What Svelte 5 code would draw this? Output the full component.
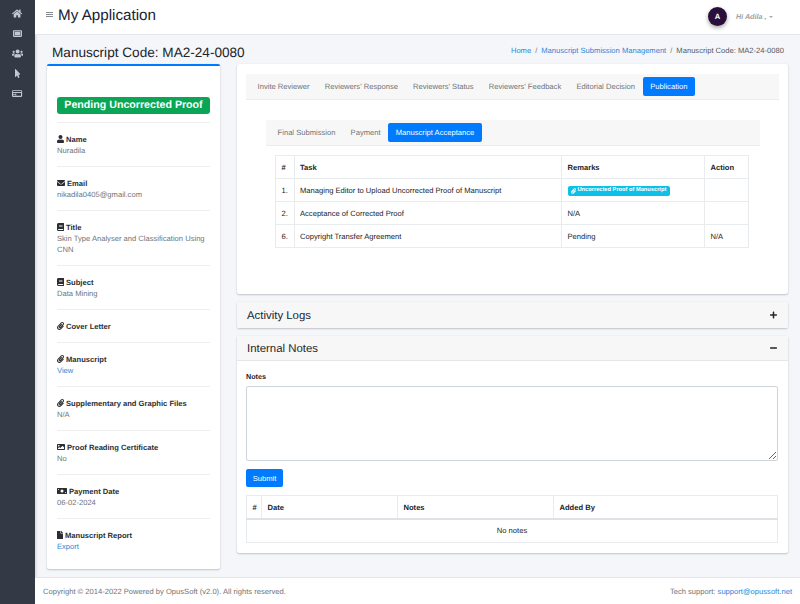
<script>
  const P = {
    home: ['0 0 576 512','M280.37 148.26L96 300.11V464a16 16 0 0 0 16 16l112.06-.29a16 16 0 0 0 15.92-16V368a16 16 0 0 1 16-16h64a16 16 0 0 1 16 16v95.64a16 16 0 0 0 16 16.05L464 480a16 16 0 0 0 16-16V300L295.67 148.26a12.19 12.19 0 0 0-15.3 0zM571.6 251.47L488 182.56V44.05a12 12 0 0 0-12-12h-56a12 12 0 0 0-12 12v72.61L318.47 43a48 48 0 0 0-61 0L4.34 251.47a12 12 0 0 0-1.6 16.9l25.5 31A12 12 0 0 0 45.15 301l235.22-193.74a12.19 12.19 0 0 1 15.3 0L530.9 301a12 12 0 0 0 16.9-1.6l25.5-31a12 12 0 0 0-1.7-16.93z'],
    frame: ['0 0 512 512','M464 64H48C21.5 64 0 85.5 0 112v288c0 26.5 21.5 48 48 48h416c26.5 0 48-21.5 48-48V112c0-26.5-21.500-48-48-48zM448 384H64V128h384z M96 160h320v192H96z'],
    users: ['0 0 640 512','M96 224c35.3 0 64-28.7 64-64s-28.7-64-64-64-64 28.7-64 64 28.7 64 64 64zm448 0c35.3 0 64-28.7 64-64s-28.7-64-64-64-64 28.7-64 64 28.7 64 64 64zm32 32h-64c-17.6 0-33.5 7.1-45.1 18.6 40.3 22.1 68.9 62 75.1 109.4h66c17.7 0 32-14.3 32-32v-32c0-35.3-28.7-64-64-64zm-256 0c61.9 0 112-50.1 112-112S381.9 32 320 32 208 82.1 208 144s50.1 112 112 112zm76.8 32h-8.3c-20.8 10-43.9 16-68.5 16s-47.6-6-68.5-16h-8.3C179.6 288 128 339.6 128 403.2V432c0 26.5 21.5 48 48 48h288c26.5 0 48-21.5 48-48v-28.8c0-63.6-51.6-115.2-115.2-115.2zm-223.7-13.4C161.5 263.1 145.6 256 128 256H64c-35.3 0-64 28.7-64 64v32c0 17.7 14.3 32 32 32h65.9c6.3-47.4 34.9-87.3 75.2-109.4z'],
    pointer: ['0 0 320 512','M302.189 329.126H196.105l55.831 135.993c3.889 9.428-.555 19.999-9.444 23.999l-49.165 21.427c-9.165 4-19.443-.571-23.332-9.714l-53.053-129.136-86.664 89.138C18.729 472.71 0 463.554 0 447.977V18.299C0 1.899 19.921-6.096 30.277 5.443l284.412 292.542c11.472 11.179 3.007 31.141-12.5 31.141z'],
    card: ['0 0 576 512','M528 64H48C21.500 64 0 85.500 0 112v288c0 26.500 21.500 48 48 48h480c26.500 0 48-21.500 48-48V112c0-26.500-21.500-48-48-48zM64 224h144v64H64zm0 96h144v64H64zm448 64H240V224h272z M48 112h480v64H48z'],
    user: ['0 0 448 512','M224 256c70.7 0 128-57.3 128-128S294.7 0 224 0 96 57.3 96 128s57.3 128 128 128zm89.6 32h-16.7c-22.2 10.2-46.9 16-72.9 16s-50.6-5.8-72.9-16h-16.7C60.2 288 0 348.2 0 422.4V464c0 26.5 21.5 48 48 48h352c26.5 0 48-21.5 48-48v-41.6c0-74.2-60.2-134.4-134.4-134.4z'],
    mail: ['0 0 512 512','M502.3 190.8c3.9-3.1 9.7-.2 9.7 4.7V400c0 26.5-21.5 48-48 48H48c-26.5 0-48-21.5-48-48V195.6c0-5 5.7-7.8 9.7-4.7 22.4 17.4 52.1 39.5 154.1 113.6 21.1 15.4 56.7 47.8 92.2 47.6 35.7.3 72-32.8 92.3-47.6 102-74.1 131.6-96.3 154-113.7zM256 320c23.2.4 56.6-29.2 73.4-41.4 132.7-96.3 142.8-104.7 173.4-128.7 5.8-4.5 9.2-11.5 9.2-18.9v-19c0-26.5-21.5-48-48-48H48C21.5 64 0 85.5 0 112v19c0 7.4 3.4 14.3 9.2 18.9 30.6 23.9 40.7 32.4 173.4 128.7 16.8 12.2 50.2 41.8 73.4 41.4z'],
    book: ['0 0 448 512','M448 360V24c0-13.3-10.7-24-24-24H96C43 0 0 43 0 96v320c0 53 43 96 96 96h328c13.3 0 24-10.7 24-24v-16c0-7.5-3.5-14.3-8.9-18.7-4.2-15.4-4.2-59.3 0-74.7 5.4-4.3 8.9-11.1 8.9-18.6zM128 134c0-3.3 2.7-6 6-6h212c3.3 0 6 2.7 6 6v20c0 3.3-2.7 6-6 6H134c-3.3 0-6-2.7-6-6v-20zm0 64c0-3.3 2.7-6 6-6h212c3.3 0 6 2.7 6 6v20c0 3.3-2.7 6-6 6H134c-3.3 0-6-2.7-6-6v-20zm253.4 250H96c-17.7 0-32-14.3-32-32 0-17.6 14.4-32 32-32h285.4c-1.9 17.1-1.9 46.9 0 64z'],
    clip: ['0 0 448 512','M43.246 466.142c-58.43-60.289-57.341-157.511 1.386-217.581L254.392 34c44.316-45.332 116.351-45.336 160.671 0 43.89 44.894 43.943 117.329 0 162.276L232.214 383.128c-29.855 30.537-78.633 30.111-107.982-.998-28.275-29.97-27.368-77.473 1.452-106.953l143.743-146.835c6.182-6.314 16.312-6.422 22.626-.241l22.861 22.379c6.315 6.182 6.422 16.312.241 22.626L171.427 319.927c-4.932 5.045-5.236 13.428-.648 18.292 4.372 4.634 11.245 4.711 15.688.165l182.849-186.851c19.613-20.062 19.613-52.725-.011-72.798-19.189-19.627-49.957-19.637-69.154 0L90.39 293.295c-34.763 35.56-35.299 93.12-1.191 128.313 34.01 35.093 88.985 35.137 123.058.286l172.06-175.999c6.177-6.319 16.307-6.433 22.626-.256l22.877 22.364c6.319 6.177 6.434 16.307.256 22.626l-172.06 175.998c-59.576 60.938-155.943 60.216-214.77-.485z'],
    image: ['0 0 512 512','M464 448H48c-26.51 0-48-21.49-48-48V112c0-26.51 21.49-48 48-48h416c26.51 0 48 21.49 48 48v288c0 26.51-21.49 48-48 48zM112 120c-30.928 0-56 25.072-56 56s25.072 56 56 56 56-25.072 56-56-25.072-56-56-56zM64 384h384V272l-87.515-87.515c-4.686-4.686-12.284-4.686-16.971 0L208 320l-55.515-55.515c-4.686-4.686-12.284-4.686-16.971 0L64 336v48z'],
    money: ['0 0 640 512','M32 64h576c17.700 0 32 14.300 32 32v320c0 17.700-14.300 32-32 32H32c-17.700 0-32-14.300-32-32V96c0-17.700 14.300-32 32-32zM320 160a96 96 0 1 0 0 192 96 96 0 1 0 0-192z M64 128v64a64 64 0 0 0 64-64z M576 384v-64a64 64 0 0 0-64 64z'],
    file: ['0 0 384 512','M224 136V0H24C10.7 0 0 10.7 0 24v464c0 13.3 10.7 24 24 24h336c13.3 0 24-10.7 24-24V160H248c-13.2 0-24-10.8-24-24zm160-14.1v6.1H256V0h6.1c6.4 0 12.5 2.5 17 7l97.9 98c4.5 4.5 7 10.6 7 16.9z'],
    plus: ['0 0 448 512','M416 208H272V64c0-17.670-14.330-32-32-32h-32c-17.670 0-32 14.330-32 32v144H32c-17.670 0-32 14.330-32 32v32c0 17.670 14.330 32 32 32h144v144c0 17.670 14.330 32 32 32h32c17.670 0 32-14.330 32-32V304h144c17.670 0 32-14.330 32-32v-32c0-17.670-14.330-32-32-32z'],
    minus: ['0 0 448 512','M416 208H32c-17.670 0-32 14.330-32 32v32c0 17.670 14.330 32 32 32h384c17.670 0 32-14.330 32-32v-32c0-17.670-14.330-32-32-32z']
  };
  const side = ['home', 'frame', 'users', 'pointer', 'card'];
  const info = [
    { icon: 'user', label: 'Name', value: 'Nuradila' },
    { icon: 'mail', label: 'Email', value: 'nikadila0405@gmail.com' },
    { icon: 'book', label: 'Title', value: 'Skin Type Analyser and Classification Using CNN' },
    { icon: 'book', label: 'Subject', value: 'Data Mining' },
    { icon: 'clip', label: 'Cover Letter' },
    { icon: 'clip', label: 'Manuscript', link: 'View' },
    { icon: 'clip', label: 'Supplementary and Graphic Files', value: 'N/A' },
    { icon: 'image', label: 'Proof Reading Certificate', value: 'No' },
    { icon: 'money', label: 'Payment Date', value: '06-02-2024' },
    { icon: 'file', label: 'Manuscript Report', link: 'Export' }
  ];
  const tabs = ['Invite Reviewer', "Reviewers' Response", "Reviewers' Status", "Reviewers' Feedback", 'Editorial Decision', 'Publication'];
  const sub = ['Final Submission', 'Payment', 'Manuscript Acceptance'];
</script>

{#snippet ic(name, cls)}
  <svg class={cls} viewBox={P[name][0]} aria-hidden="true"><path fill-rule="evenodd" d={P[name][1]} /></svg>
{/snippet}

<div class="shell">
  <aside class="sidebar">
    {#each side as s}
      <span class="side-item">{@render ic(s, 'side-ic')}</span>
    {/each}
  </aside>
  <div class="main">
    <header class="topbar">
      <span class="burger"><i></i><i></i><i></i></span>
      <span class="app">My Application</span>
      <span class="avatar">A</span>
      <span class="hi">Hi Adila ,</span>
      <span class="caret"></span>
    </header>
    <div class="content">
      <div class="page-head">
        <h1>Manuscript Code: MA2-24-0080</h1>
        <nav class="crumbs"><a href="#h">Home</a><b>/</b><a href="#m">Manuscript Submission Management</a><b>/</b><span>Manuscript Code: MA2-24-0080</span></nav>
      </div>
      <div class="columns">
        <section class="profile">
          <div class="badge-row"><span class="status">Pending Uncorrected Proof</span></div>
          {#each info as r}
            <div class="info">
              <div class="lbl">{@render ic(r.icon, 'lbl-ic')}{r.label}</div>
              {#if r.value}<div class="val">{r.value}</div>{/if}
              {#if r.link}<a class="lnk" href="#l">{r.link}</a>{/if}
            </div>
          {/each}
        </section>
        <div class="right">
          <section class="card tabs-card">
            <div class="tabs">
              {#each tabs as t, i}<span class="tab" class:on={i === 5}>{t}</span>{/each}
            </div>
            <div class="tabs sub">
              {#each sub as t, i}<span class="tab" class:on={i === 2}>{t}</span>{/each}
            </div>
            <table class="tasks">
              <colgroup><col style="width:18.5px" /><col style="width:267.5px" /><col style="width:143px" /><col /></colgroup>
              <thead><tr><th>#</th><th>Task</th><th>Remarks</th><th>Action</th></tr></thead>
              <tbody>
                <tr><td>1.</td><td>Managing Editor to Upload Uncorrected Proof of Manuscript</td><td><span class="chip">{@render ic('clip', 'chip-ic')}Uncorrected Proof of Manuscript</span></td><td></td></tr>
                <tr><td>2.</td><td>Acceptance of Corrected Proof</td><td>N/A</td><td></td></tr>
                <tr><td>6.</td><td>Copyright Transfer Agreement</td><td>Pending</td><td>N/A</td></tr>
              </tbody>
            </table>
          </section>
          <section class="card">
            <div class="card-head closed"><span>Activity Logs</span>{@render ic('plus', 'tool')}</div>
          </section>
          <section class="card">
            <div class="card-head"><span>Internal Notes</span>{@render ic('minus', 'tool')}</div>
            <div class="notes-body">
              <label class="notes-label" for="notes">Notes</label>
              <textarea id="notes"></textarea>
              <button type="button">Submit</button>
              <table class="notes-table">
                <colgroup><col style="width:15px" /><col style="width:136px" /><col style="width:156px" /><col /></colgroup>
                <thead><tr><th>#</th><th>Date</th><th>Notes</th><th>Added By</th></tr></thead>
                <tbody><tr><td colspan="4">No notes</td></tr></tbody>
              </table>
            </div>
          </section>
        </div>
      </div>
    </div>
    <footer class="foot">
      <span>Copyright © 2014-2022 Powered by OpusSoft (v2.0). All rights reserved.</span>
      <span>Tech support: <a href="#s">support@opussoft.net</a></span>
    </footer>
  </div>
</div>

<style>
  :global(body) { margin: 0; background: #f4f6f9; }
  .shell { display: flex; width: 800px; height: 604px; overflow: hidden; font-family: "Liberation Sans", Arial, sans-serif; font-size: 7.6px; line-height: 11px; color: #212529; text-rendering: geometricPrecision; }
  a { color: #2f86d6; text-decoration: none; }

  .sidebar { width: 35px; flex: none; background: #343a45; display: flex; flex-direction: column; align-items: center; padding-top: 3px; box-sizing: border-box; box-shadow: 1px 0 3px rgba(0,0,0,.15); }
  .side-item { height: 20px; display: flex; align-items: center; justify-content: center; }
  .side-ic { height: 9px; width: auto; fill: #c2c7d0; }

  .main { flex: 1; display: flex; flex-direction: column; min-width: 0; }
  .topbar { height: 35px; flex: none; box-sizing: border-box; background: #fff; border-bottom: 1px solid #e3e6ea; display: flex; align-items: center; padding-left: 11px; }
  .burger { display: flex; flex-direction: column; gap: 1px; width: 7px; margin-right: 5px; margin-top: -5px; }
  .burger i { display: block; height: 1px; background: #858a8f; }
  .app { font-size: 15.2px; line-height: 20px; color: #1a2235; margin-top: -2px; }
  .avatar { margin-left: auto; width: 19px; height: 19px; border-radius: 50%; background: #2a0f3a; color: #fff; font-size: 7.6px; font-weight: bold; display: flex; align-items: center; justify-content: center; box-shadow: 0 2px 4px rgba(0,0,0,.35); margin-top: -1px; }
  .hi { margin-left: 9px; width: 28px; white-space: nowrap; font-style: italic; font-weight: bold; font-size: 7.2px; color: #9da1a6; margin-top: -1px; }
  .caret { margin: -1px 27px 0 5px; border-top: 2.500px solid #a5a9ae; border-left: 2.500px solid transparent; border-right: 2.500px solid transparent; }

  .content { flex: 1; min-height: 0; padding: 0 12px; display: flex; flex-direction: column; }
  .page-head { height: 29px; display: flex; align-items: center; justify-content: space-between; padding: 0 4px 0 5px; }
  h1 { margin: 5px 0 0; font-size: 13.6px; font-weight: 400; line-height: 17px; color: #212529; }
  .crumbs { display: flex; color: #6c757d; margin-top: 1px; }
  .crumbs b { font-weight: 400; margin: 0 4px; }
  .crumbs span { color: #555b61; }

  .columns { display: flex; gap: 17px; }
  .profile { width: 173px; flex: none; box-sizing: border-box; height: 505px; background: #fff; border-top: 2px solid #007bff; border-radius: 2px; box-shadow: 0 0 1px rgba(0,0,0,.13), 0 1px 2px rgba(0,0,0,.2); padding: 0 10px; }
  .badge-row { height: 56.5px; box-sizing: border-box; padding-top: 30.5px; border-bottom: 1px solid #eee; }
  .status { display: block; height: 17px; line-height: 16px; background: #0aa655; color: #fff; border-radius: 3px; font-weight: bold; font-size: 10.65px; text-align: center; white-space: nowrap; }
  .info { padding: 11px 0 10px; border-bottom: 1px solid #eee; }
  .info:last-child { border-bottom: 0; }
  .lbl { font-weight: bold; color: #2b2f33; display: flex; align-items: center; }
  .lbl-ic { height: 8px; width: auto; margin-right: 2px; fill: #2b2f33; flex: none; }
  .val { color: #6f7479; }
  .lnk { display: block; }

  .right { width: 551px; flex: none; display: flex; flex-direction: column; gap: 8px; }
  .card { background: #fff; border-radius: 2px; box-shadow: 0 0 1px rgba(0,0,0,.13), 0 1px 2px rgba(0,0,0,.2); }
  .tabs-card { height: 230px; box-sizing: border-box; padding: 10px 9px 0; }
  .tabs { height: 26px; box-sizing: border-box; background: #f7f7f7; border-bottom: 1px solid #ececec; display: flex; align-items: center; padding-left: 4px; color: #6f7479; }
  .tab { padding: 0 7.6px; height: 19px; line-height: 20px; border-radius: 2px; white-space: nowrap; margin-top: -1px; }
  .tab.on { background: #007bff; color: #fff; }
  .sub { margin: 20px 19px 0 20px; }
  .tasks { margin: 9px 0 0 29px; width: 474px; }
  table { border-collapse: collapse; table-layout: fixed; color: #212529; }
  th, td { border: 1px solid #e9ecef; text-align: left; height: 23px; padding: 0 5.500px; box-sizing: border-box; white-space: nowrap; overflow: hidden; font-size: 7.6px; }
  th { font-weight: bold; }
  .chip { display: inline-flex; align-items: center; height: 10px; padding: 0 3.500px; background: #0dc0e8; color: #fff; border-radius: 2px; font-size: 5.7px; line-height: 11px; font-weight: bold; vertical-align: middle; }
  .chip-ic { height: 6px; width: 5px; margin-right: 1.500px; fill: #fff; }

  .card-head { height: 25px; box-sizing: border-box; background: #f7f7f7; border-bottom: 1px solid #e6e6e6; display: flex; align-items: center; justify-content: space-between; padding: 0 11px 0 10px; font-size: 11.4px; color: #212529; }
  .card-head span { margin-top: 2px; }
  .card-head.closed { height: 26px; border-bottom: 0; border-radius: 2px; }
  .tool { height: 8px; width: 7px; fill: #212529; }
  .notes-body { padding: 0 10px 10px 9px; display: flex; flex-direction: column; align-items: flex-start; }
  .notes-label { font-size: 7.2px; font-weight: bold; line-height: 10px; margin-top: 11px; }
  textarea { display: block; box-sizing: border-box; width: 532px; height: 75px; margin-top: 4px; border: 1px solid #ced4da; border-radius: 2px; background: #fff; padding: 0; outline: 0; }
  button { margin-top: 8px; width: 37px; height: 18px; box-sizing: border-box; border: 0; border-radius: 2px; background: #007bff; color: #fff; font: 7.6px "Liberation Sans", Arial, sans-serif; padding: 0; }
  .notes-table { margin-top: 8px; width: 532px; }
  .notes-table th { height: 23.500px; border-bottom-width: 2px; border-bottom-color: #dee2e6; }
  .notes-table td { height: 23px; text-align: center; }

  .foot { height: 27px; flex: none; box-sizing: border-box; background: #fff; border-top: 1px solid #e3e6ea; display: flex; align-items: center; justify-content: space-between; padding: 0 8px; color: #6f7479; }
</style>
